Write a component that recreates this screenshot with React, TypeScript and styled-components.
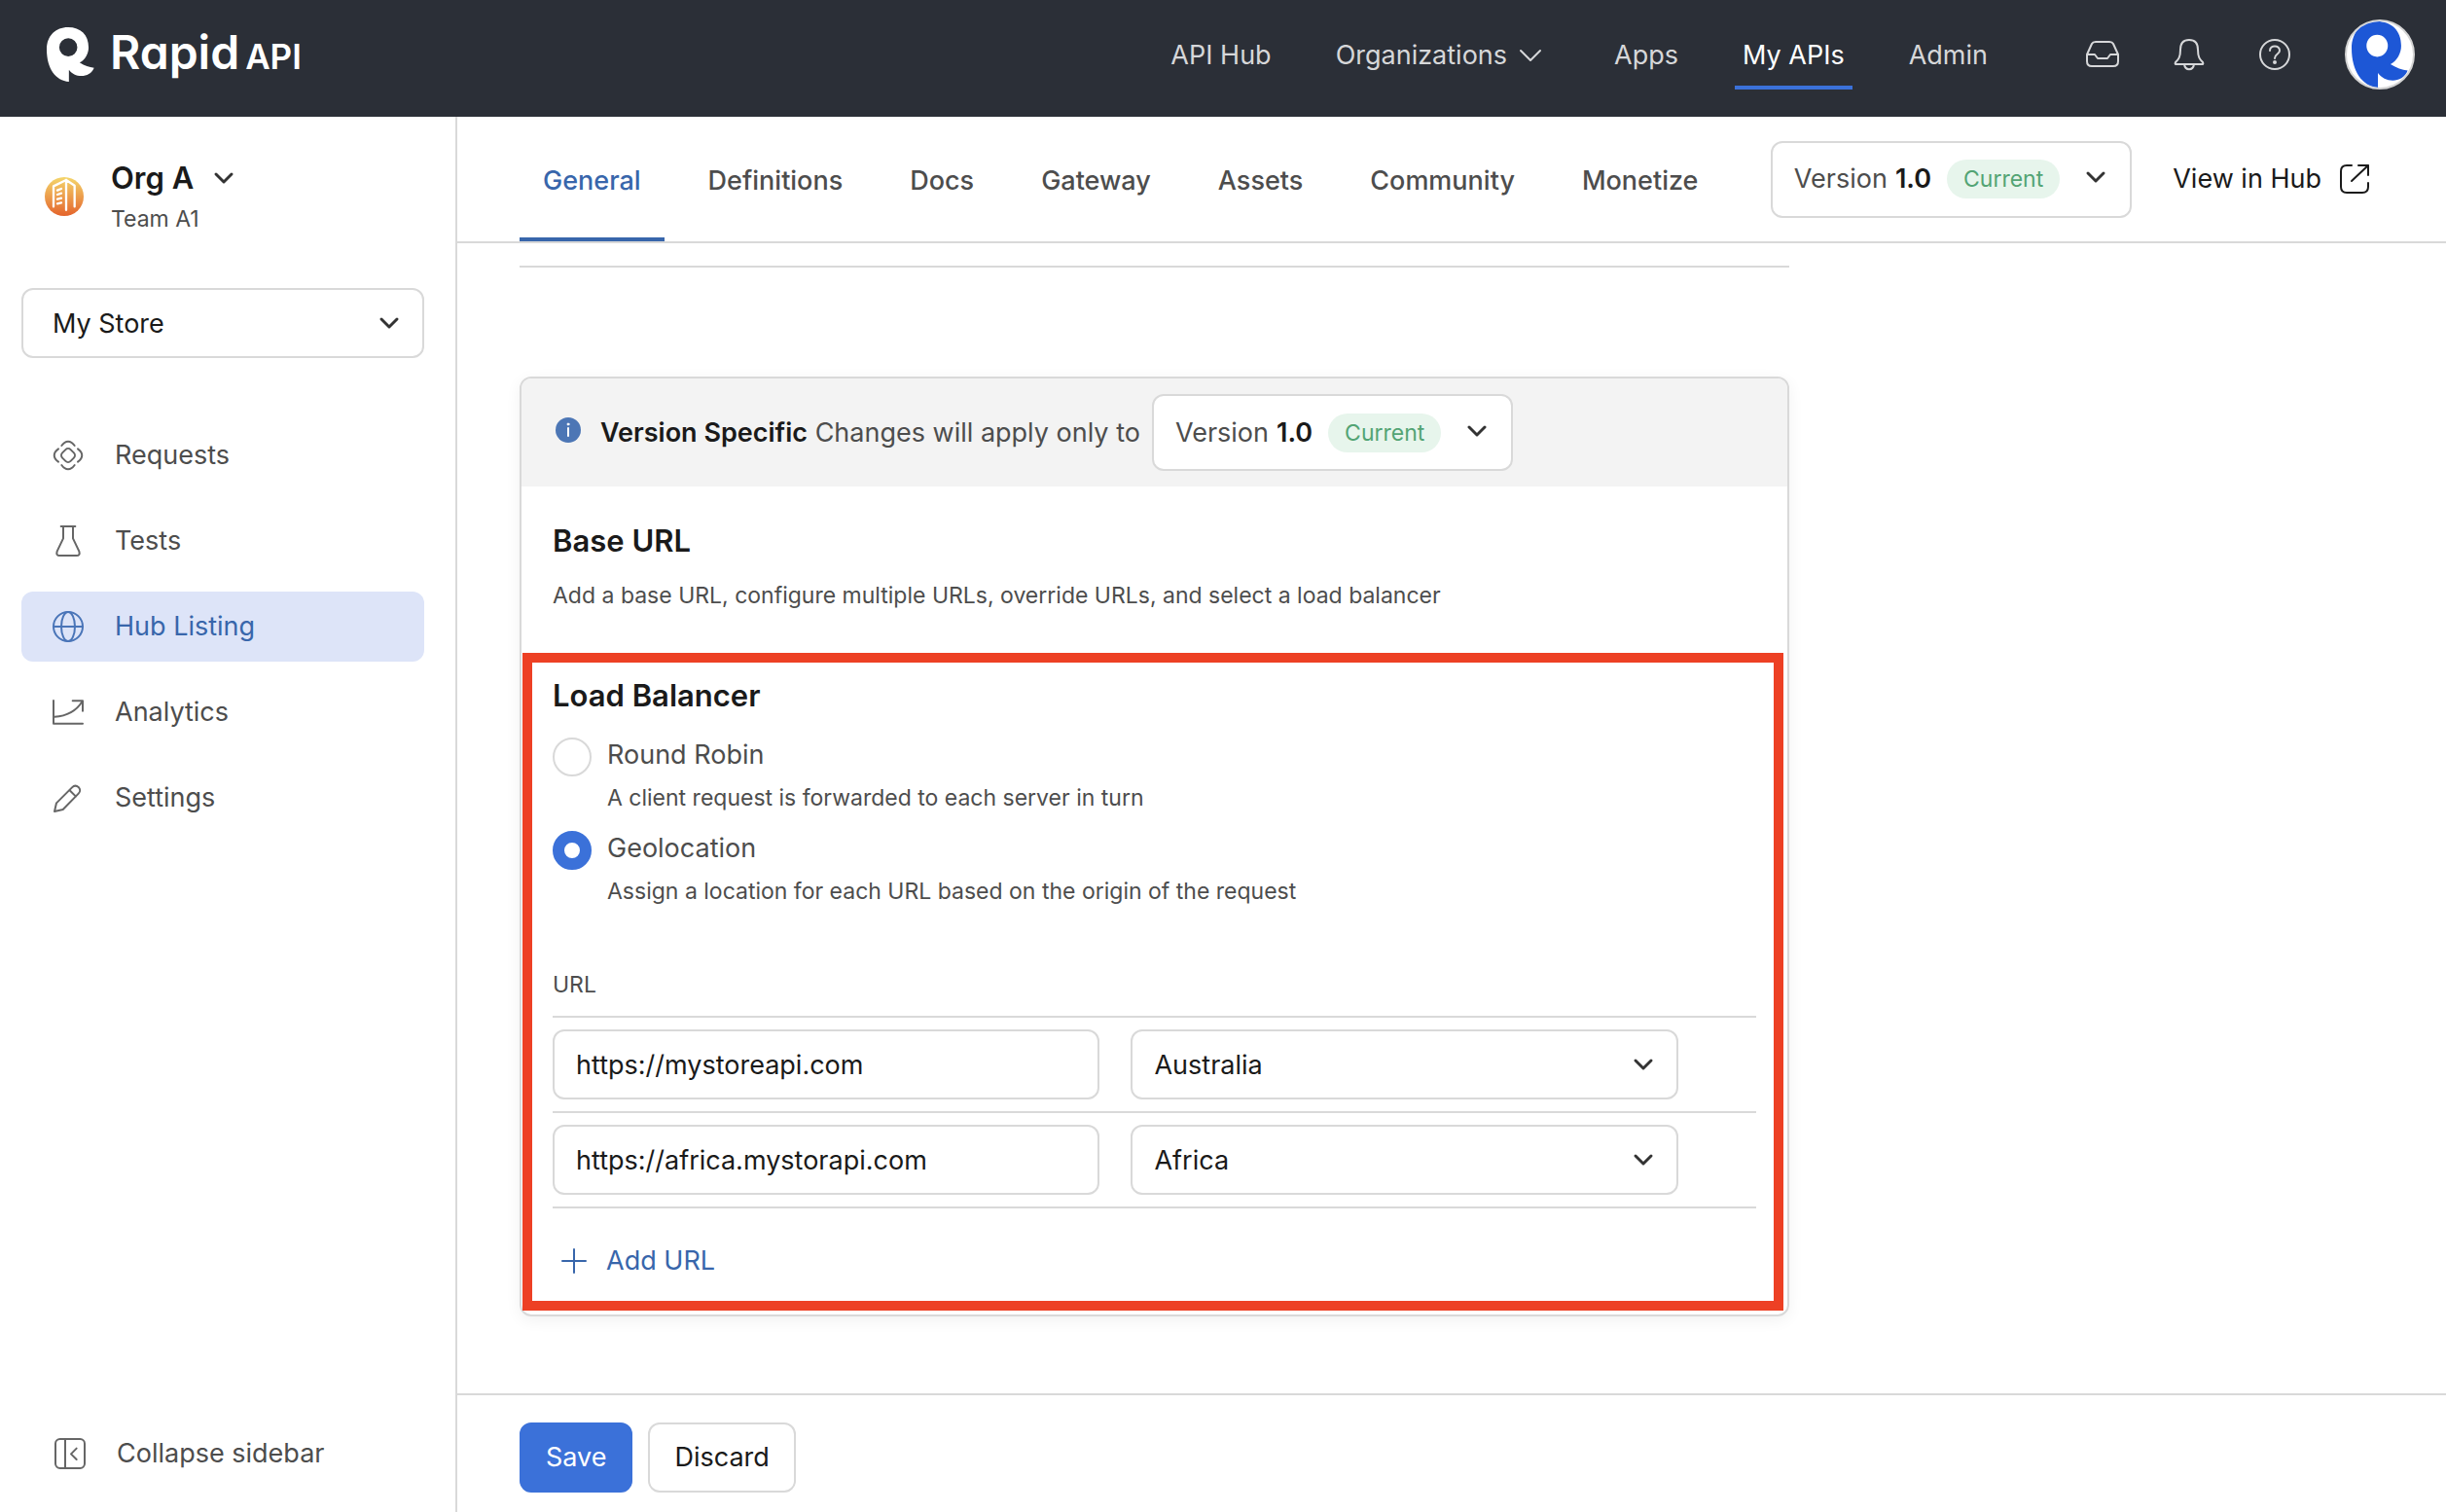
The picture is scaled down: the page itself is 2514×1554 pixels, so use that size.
import React, { useId, useState } from "react";
import styled, { createGlobalStyle, css } from "styled-components";

const color = {
  header: "#2b2f37",
  line: "#d9d9d9",
  ink: "#1a1a1a",
  body: "#4d4d4d",
  icon: "#666666",
  link: "#3866ab",
  primary: "#3b71d9",
  selected: "#dde4f8",
  banner: "#f3f3f3",
  greenBg: "#e7f5ec",
  green: "#53a474",
  red: "#ed4024",
};

const text = {
  small: css`
    font-size: 23px;
    line-height: 32px;
  `,
  base: css`
    font-size: 27px;
    line-height: 40px;
  `,
  title: css`
    font-size: 31px;
    line-height: 40px;
    font-weight: 600;
  `,
};

const GlobalStyle = createGlobalStyle`
  *, *::before, *::after { box-sizing: border-box; }
  body { margin: 0; background: #fff; }
  body, button, input, select {
    font-family: Inter, "Liberation Sans", sans-serif;
    color: ${color.body};
  }
  h1, h2, p { margin: 0; }
  a { color: inherit; text-decoration: none; }
  button { background: none; border: 0; padding: 0; cursor: pointer; }
  svg { display: block; flex: none; fill: none; stroke: currentColor; stroke-linecap: round; stroke-linejoin: round; }
`;

/* ---------- icons ---------- */

const Chevron = ({ wide = false }: { wide?: boolean }) => (
  <svg width={wide ? 24 : 22} height="14" viewBox={wide ? "0 0 24 14" : "0 0 22 14"} strokeWidth={wide ? 2 : 3} aria-hidden="true">
    <path d={wide ? "M2 2L12 12L22 2" : "M3 3L11 11L19 3"} />
  </svg>
);

const NavIcon = ({ children }: { children: React.ReactNode }) => (
  <svg width="32" height="32" viewBox="0 0 96 96" strokeWidth="6" aria-hidden="true">
    {children}
  </svg>
);

const RequestsIcon = () => (
  <NavIcon>
    <rect x="30" y="30" width="36" height="36" rx="11" transform="rotate(45 48 48)" />
    <path d="M28 18C40 1 56 1 68 18M28 78C40 95 56 95 68 78M18 28C1 40 1 56 18 68M78 28C95 40 95 56 78 68" />
  </NavIcon>
);

const TestsIcon = () => (
  <NavIcon>
    <path d="M26 3H70M33 3V40L14 80Q10 93 22 93H74Q86 93 82 80L63 40V3" />
  </NavIcon>
);

const GlobeIcon = () => (
  <NavIcon>
    <circle cx="48" cy="48" r="45" />
    <ellipse cx="48" cy="48" rx="21" ry="45" />
    <path d="M3 48H93" />
  </NavIcon>
);

const AnalyticsIcon = () => (
  <NavIcon>
    <path d="M3 12V83H93M6 62C40 60 72 46 92 14M62 13H93V44" />
  </NavIcon>
);

const PencilIcon = () => (
  <NavIcon>
    <path d="M6 90L12 64L60 16C66 10 74 10 80 15C86 21 86 29 80 35L32 84ZM52 24L72 44" />
  </NavIcon>
);

const CollapseIcon = () => (
  <NavIcon>
    <rect x="3" y="3" width="90" height="90" rx="14" />
    <path d="M33 3V93M68 32L51 49L68 66" />
  </NavIcon>
);

const InboxIcon = () => (
  <svg width="36" height="32" viewBox="0 0 36 32" strokeWidth="2" aria-hidden="true">
    <path d="M2 16L7 5Q8 3 11 3H25Q28 3 29 5L34 16V23Q34 28 29 28H7Q2 28 2 23ZM2 16H10L13 20H23L26 16H34" />
  </svg>
);

const BellIcon = () => (
  <svg width="32" height="34" viewBox="0 0 32 34" strokeWidth="2" aria-hidden="true">
    <path d="M16 2C10 2 7 6 7 12C7 20 5 22 2 25C1 27 2 27 3 27H29C30 27 31 27 30 25C27 22 25 20 25 12C25 6 22 2 16 2ZM11 27C12 34 20 34 21 27" />
  </svg>
);

const HelpIcon = () => (
  <svg width="34" height="34" viewBox="0 0 34 34" strokeWidth="2" aria-hidden="true">
    <circle cx="17" cy="17" r="15" />
    <path d="M12 13C12 7 22 7 22 13C22 17 17 16 17 21" />
    <circle cx="17" cy="25" r="1" fill="currentColor" />
  </svg>
);

const ExternalIcon = () => (
  <svg width="32" height="32" viewBox="0 0 32 32" strokeWidth="2" aria-hidden="true">
    <path d="M13 2H8Q2 2 2 8V24Q2 30 8 30H24Q30 30 30 24V20M13 18L30 2M20 2H30V12" />
  </svg>
);

const InfoIcon = () => (
  <svg width="26" height="26" viewBox="0 0 26 26" aria-hidden="true">
    <circle cx="13" cy="13" r="13" fill="#4c76b5" stroke="none" />
    <path d="M13 11V19" stroke="#fff" strokeWidth="2" />
    <circle cx="13" cy="7" r="1" fill="#fff" stroke="#fff" strokeWidth="1" />
  </svg>
);

const PlusIcon = () => (
  <svg width="28" height="28" viewBox="0 0 28 28" strokeWidth="2" aria-hidden="true">
    <path d="M14 2V26M2 14H26" />
  </svg>
);

const Mark = ({ width, height }: { width: number; height: number }) => (
  <svg width={width} height={height} viewBox="144 84 148 168" preserveAspectRatio="none" aria-hidden="true">
    <path
      fill="currentColor"
      stroke="none"
      fillRule="evenodd"
      d="M210 84C250 84 274 108 274 146C274 166 263 184 246 193C262 203 276 207 291 209C284 226 268 234 252 234C236 234 222 227 213 215V252C172 248 144 212 144 152C144 110 172 84 210 84ZM211 118A28 28 0 1 0 211 174A28 28 0 1 0 211 118Z"
    />
  </svg>
);

const OrgIcon = () => (
  <svg width="40" height="40" viewBox="0 0 120 120" strokeWidth="7" aria-hidden="true">
    <defs>
      <linearGradient id="orgFill" x1="0" y1="0" x2="0" y2="1">
        <stop offset="0" stopColor="#f4d66c" />
        <stop offset="1" stopColor="#e4642c" />
      </linearGradient>
    </defs>
    <circle cx="60" cy="60" r="60" fill="url(#orgFill)" stroke="none" />
    <path stroke="#fff" d="M27 91V28L66 9L92 26V91M66 9V101M39 41L51 36M39 54L51 50M39 68L51 65M39 82L51 79" />
  </svg>
);

/* ---------- shell ---------- */

const Shell = styled.div`
  display: flex;
  flex-direction: column;
  height: 100vh;
`;

const TopBar = styled.header`
  display: flex;
  align-items: center;
  justify-content: space-between;
  height: 120px;
  padding: 0 32px 8px 48px;
  background: ${color.header};
  color: #d6d7d9;
  flex: none;
`;

const Logo = styled.a`
  display: flex;
  align-items: center;
  gap: 16px;
  color: #fff;
`;

const Wordmark = styled.span`
  display: flex;
  align-items: baseline;
  gap: 6px;
  font-size: 48px;
  line-height: 56px;
  font-weight: 600;
  font-feature-settings: "cv11";
`;

const WordmarkSuffix = styled.span`
  font-size: 35px;
`;

const TopNav = styled.nav`
  display: flex;
  align-items: center;
  gap: 50px;
`;

const TopLink = styled.a<{ $active?: boolean }>`
  ${text.base}
  display: flex;
  align-items: center;
  gap: 12px;
  height: 72px;
  padding: 6px 8px 0;
  border-bottom: 4px solid ${(p) => (p.$active ? color.primary : "transparent")};
  color: ${(p) => (p.$active ? "#fff" : "inherit")};

  svg {
    margin-right: 8px;
  }
`;

const TopActions = styled.div`
  display: flex;
  align-items: center;
  gap: 55px;
  margin-left: 42px;
`;

const IconButton = styled.button`
  color: #d6d7d9;
`;

const Avatar = styled.button`
  display: flex;
  align-items: center;
  justify-content: center;
  width: 72px;
  height: 72px;
  border: 2px solid #d4d4d4;
  border-radius: 50%;
  background: #fff;
  color: #1d57d6;
  overflow: hidden;
`;

const Body = styled.div`
  display: flex;
  flex: 1;
  min-height: 0;
`;

/* ---------- sidebar ---------- */

const Sidebar = styled.aside`
  display: flex;
  flex-direction: column;
  flex: none;
  width: 470px;
  padding: 43px 32px 24px 22px;
  border-right: 2px solid ${color.line};
`;

const Org = styled.button`
  display: flex;
  align-items: center;
  gap: 28px;
  padding-left: 24px;
  text-align: left;
`;

const OrgText = styled.span`
  display: grid;
  gap: 6px;
`;

const OrgName = styled.span`
  ${text.title}
  display: flex;
  align-items: center;
  gap: 20px;
  color: ${color.ink};

  svg {
    color: #333;
  }
`;

const OrgTeam = styled.span`
  ${text.small}
`;

const SideNav = styled.nav`
  display: grid;
  gap: 16px;
  margin-top: 64px;
`;

const sideItem = css`
  ${text.base}
  display: flex;
  align-items: center;
  gap: 32px;
  height: 72px;
  padding: 0 32px;
  border-radius: 12px;
`;

const SideLink = styled.a<{ $active?: boolean }>`
  ${sideItem}
  background: ${(p) => (p.$active ? color.selected : "transparent")};
  color: ${(p) => (p.$active ? color.link : color.body)};

  svg {
    color: ${(p) => (p.$active ? "#4a75b8" : color.icon)};
  }
`;

const CollapseButton = styled.button`
  ${sideItem}
  margin-top: auto;
  padding: 0 34px;

  svg {
    color: ${color.icon};
  }
`;

/* ---------- form controls ---------- */

const control = css`
  ${text.base}
  width: 100%;
  height: 72px;
  border: 2px solid ${color.line};
  border-radius: 12px;
  background: #fff;
  color: ${color.ink};
`;

const TextInput = styled.input`
  ${control}
  display: block;
  padding: 0 22px;
`;

const SelectWrap = styled.div`
  display: grid;
  align-items: center;
  color: #333;

  > * {
    grid-area: 1 / 1;
  }

  > svg {
    justify-self: end;
    margin-right: 25px;
    pointer-events: none;
  }
`;

const SelectBox = styled.select<{ $pad: number }>`
  ${control}
  padding: 2px ${(p) => p.$pad}px 0;
  appearance: none;
`;

type PickerProps = { label: string; value: string; options: string[]; pad?: number };

const Picker = ({ label, value, options, pad = 22 }: PickerProps) => (
  <SelectWrap>
    <SelectBox aria-label={label} defaultValue={value} $pad={pad}>
      {options.map((o) => (
        <option key={o}>{o}</option>
      ))}
    </SelectBox>
    <Chevron />
  </SelectWrap>
);

const SidePicker = styled.div`
  margin-top: 55px;
`;

const VersionButton = styled.button`
  ${text.base}
  display: flex;
  align-items: center;
  height: 79px;
  padding: 0 24px 0 22px;
  border: 2px solid ${color.line};
  border-radius: 12px;
  background: #fff;
  white-space: nowrap;

  strong {
    margin-left: 8px;
    font-weight: 600;
    color: ${color.ink};
  }

  svg {
    margin-bottom: 4px;
    color: #333;
  }
`;

const Badge = styled.span`
  margin: 0 26px 0 16px;
  padding: 0 17px;
  border-radius: 20px;
  background: ${color.greenBg};
  color: ${color.green};
  font-size: 23px;
  line-height: 40px;
`;

const VersionPicker = () => (
  <VersionButton type="button" aria-haspopup="listbox">
    Version <strong>1.0</strong>
    <Badge>Current</Badge>
    <Chevron />
  </VersionButton>
);

/* ---------- main column ---------- */

const Main = styled.main`
  display: flex;
  flex-direction: column;
  flex: 1;
  min-width: 0;
`;

const TabBar = styled.div`
  display: flex;
  align-items: center;
  justify-content: space-between;
  height: 130px;
  padding: 0 78px 0 64px;
  border-bottom: 2px solid ${color.line};
  flex: none;
`;

const Tabs = styled.nav`
  display: flex;
  align-self: stretch;
  gap: 21px;
`;

const Tab = styled.a<{ $active?: boolean }>`
  ${text.base}
  display: flex;
  align-items: center;
  padding: 8px 24px 0;
  border-bottom: 4px solid ${(p) => (p.$active ? color.link : "transparent")};
  border-radius: 4px 4px 0 0;
  color: ${(p) => (p.$active ? color.link : color.body)};
  font-weight: 500;
`;

const TabActions = styled.div`
  display: flex;
  align-items: center;
  gap: 42px;
`;

const HubLink = styled.a`
  ${text.base}
  display: flex;
  align-items: center;
  gap: 18px;
  color: ${color.ink};
  white-space: nowrap;
`;

const Content = styled.div`
  flex: 1;
  min-height: 0;
  overflow: hidden;
  padding: 23px 64px 0;
`;

const Divider = styled.hr`
  max-width: 1305px;
  height: 2px;
  margin: 0 0 112px;
  border: 0;
  background: ${color.line};
`;

const Card = styled.section`
  max-width: 1305px;
  border: 2px solid ${color.line};
  border-radius: 12px;
  box-shadow: 0 4px 16px rgba(0, 0, 0, 0.06);
`;

const Banner = styled.div`
  ${text.base}
  display: flex;
  align-items: center;
  padding: 16px 35px;
  border-radius: 10px 10px 0 0;
  background: ${color.banner};

  > svg {
    margin-bottom: 6px;
  }
`;

const BannerText = styled.p`
  margin: 0 12px 0 20px;

  strong {
    font-weight: 600;
    color: ${color.ink};
  }
`;

const BaseUrl = styled.div`
  display: grid;
  gap: 20px;
  padding: 36px 32px 43px;
`;

const Title = styled.h2`
  ${text.title}
  color: ${color.ink};
`;

const Note = styled.p`
  ${text.small}
`;

const Highlighted = styled.div`
  position: relative;
  padding: 24px 32px 35px;

  &::after {
    content: "";
    position: absolute;
    inset: 0 4px 4px 1px;
    border: 10px solid ${color.red};
    pointer-events: none;
  }
`;

const Choices = styled.div`
  display: grid;
  gap: 16px;
  margin: 21px 0 64px;
`;

const Choice = styled.label`
  display: grid;
  grid-template-columns: 40px 1fr;
  gap: 8px 16px;
  align-items: center;

  ${Note} {
    grid-column: 2;
  }
`;

const Radio = styled.input`
  appearance: none;
  width: 40px;
  height: 40px;
  margin: 2px 0 -2px;
  border: 2px solid ${color.line};
  border-radius: 50%;

  &:checked {
    border: 12px solid ${color.primary};
  }
`;

const ChoiceName = styled.span`
  ${text.base}
`;

const UrlTable = styled.table`
  width: 100%;
  table-layout: fixed;
  border-spacing: 0;

  th {
    ${text.small}
    padding: 0 0 16px;
    border-bottom: 2px solid ${color.line};
    font-weight: 400;
    text-align: left;
  }

  td {
    padding: 12px 0;
    border-bottom: 2px solid ${color.line};
  }

  td:nth-child(1) {
    padding-right: 16px;
  }

  td:nth-child(2) {
    padding-left: 16px;
  }
`;

const SpareColumn = styled.col`
  width: 80px;
`;

const AddButton = styled.button`
  ${text.base}
  display: flex;
  align-items: center;
  gap: 19px;
  margin-top: 34px;
  padding-left: 8px;
  color: ${color.link};
`;

const Footer = styled.footer`
  display: flex;
  gap: 16px;
  flex: none;
  padding: 28px 64px 20px;
  border-top: 2px solid ${color.line};
`;

const ActionButton = styled.button<{ $primary?: boolean }>`
  ${text.base}
  height: 72px;
  padding: 0 25px;
  border: 2px solid ${(p) => (p.$primary ? color.primary : color.line)};
  border-radius: 12px;
  background: ${(p) => (p.$primary ? color.primary : "#fff")};
  color: ${(p) => (p.$primary ? "#fff" : color.ink)};
`;

/* ---------- data ---------- */

const sideLinks = [
  { name: "Requests", Icon: RequestsIcon },
  { name: "Tests", Icon: TestsIcon },
  { name: "Hub Listing", Icon: GlobeIcon },
  { name: "Analytics", Icon: AnalyticsIcon },
  { name: "Settings", Icon: PencilIcon },
];

const tabs = ["General", "Definitions", "Docs", "Gateway", "Assets", "Community", "Monetize"];

const choices = [
  { name: "Round Robin", note: "A client request is forwarded to each server in turn" },
  { name: "Geolocation", note: "Assign a location for each URL based on the origin of the request" },
];

const urls = [
  { url: "https://mystoreapi.com", region: "Australia" },
  { url: "https://africa.mystorapi.com", region: "Africa" },
];

const LoadBalancer = () => {
  const group = useId();
  const [mode, setMode] = useState("Geolocation");
  return (
    <Highlighted>
      <Title>Load Balancer</Title>
      <Choices role="radiogroup" aria-label="Load Balancer">
        {choices.map(({ name, note }) => (
          <Choice key={name}>
            <Radio type="radio" name={group} checked={mode === name} onChange={() => setMode(name)} />
            <ChoiceName>{name}</ChoiceName>
            <Note as="span">{note}</Note>
          </Choice>
        ))}
      </Choices>
      <UrlTable>
        <colgroup>
          <col />
          <col />
          <SpareColumn />
        </colgroup>
        <thead>
          <tr>
            <th colSpan={3}>URL</th>
          </tr>
        </thead>
        <tbody>
          {urls.map(({ url, region }) => (
            <tr key={url}>
              <td>
                <TextInput type="text" aria-label="URL" defaultValue={url} />
              </td>
              <td>
                <Picker label="Location" value={region} options={["Australia", "Africa"]} />
              </td>
              <td />
            </tr>
          ))}
        </tbody>
      </UrlTable>
      <AddButton type="button">
        <PlusIcon />
        Add URL
      </AddButton>
    </Highlighted>
  );
};

export default function App() {
  return (
    <Shell>
      <GlobalStyle />
      <TopBar>
        <Logo href="#">
          <Mark width={49} height={56} />
          <Wordmark>
            Rapid<WordmarkSuffix>API</WordmarkSuffix>
          </Wordmark>
        </Logo>
        <TopNav>
          <TopLink href="#">API Hub</TopLink>
          <TopLink href="#">
            Organizations
            <Chevron wide />
          </TopLink>
          <TopLink href="#">Apps</TopLink>
          <TopLink href="#" $active>
            My APIs
          </TopLink>
          <TopLink href="#">Admin</TopLink>
          <TopActions>
            <IconButton type="button" aria-label="Inbox">
              <InboxIcon />
            </IconButton>
            <IconButton type="button" aria-label="Notifications">
              <BellIcon />
            </IconButton>
            <IconButton type="button" aria-label="Help">
              <HelpIcon />
            </IconButton>
            <Avatar type="button" aria-label="Account">
              <Mark width={58} height={68} />
            </Avatar>
          </TopActions>
        </TopNav>
      </TopBar>
      <Body>
        <Sidebar>
          <Org type="button">
            <OrgIcon />
            <OrgText>
              <OrgName>
                Org A
                <Chevron />
              </OrgName>
              <OrgTeam>Team A1</OrgTeam>
            </OrgText>
          </Org>
          <SidePicker>
            <Picker label="API" value="My Store" options={["My Store"]} pad={30} />
          </SidePicker>
          <SideNav>
            {sideLinks.map(({ name, Icon }) => (
              <SideLink key={name} href="#" $active={name === "Hub Listing"}>
                <Icon />
                {name}
              </SideLink>
            ))}
          </SideNav>
          <CollapseButton type="button">
            <CollapseIcon />
            Collapse sidebar
          </CollapseButton>
        </Sidebar>
        <Main>
          <TabBar>
            <Tabs>
              {tabs.map((name) => (
                <Tab key={name} href="#" $active={name === "General"}>
                  {name}
                </Tab>
              ))}
            </Tabs>
            <TabActions>
              <VersionPicker />
              <HubLink href="#">
                View in Hub
                <ExternalIcon />
              </HubLink>
            </TabActions>
          </TabBar>
          <Content>
            <Divider />
            <Card>
              <Banner>
                <InfoIcon />
                <BannerText>
                  <strong>Version Specific</strong> Changes will apply only to
                </BannerText>
                <VersionPicker />
              </Banner>
              <BaseUrl>
                <Title>Base URL</Title>
                <Note>Add a base URL, configure multiple URLs, override URLs, and select a load balancer</Note>
              </BaseUrl>
              <LoadBalancer />
            </Card>
          </Content>
          <Footer>
            <ActionButton type="button" $primary>
              Save
            </ActionButton>
            <ActionButton type="button">Discard</ActionButton>
          </Footer>
        </Main>
      </Body>
    </Shell>
  );
}
